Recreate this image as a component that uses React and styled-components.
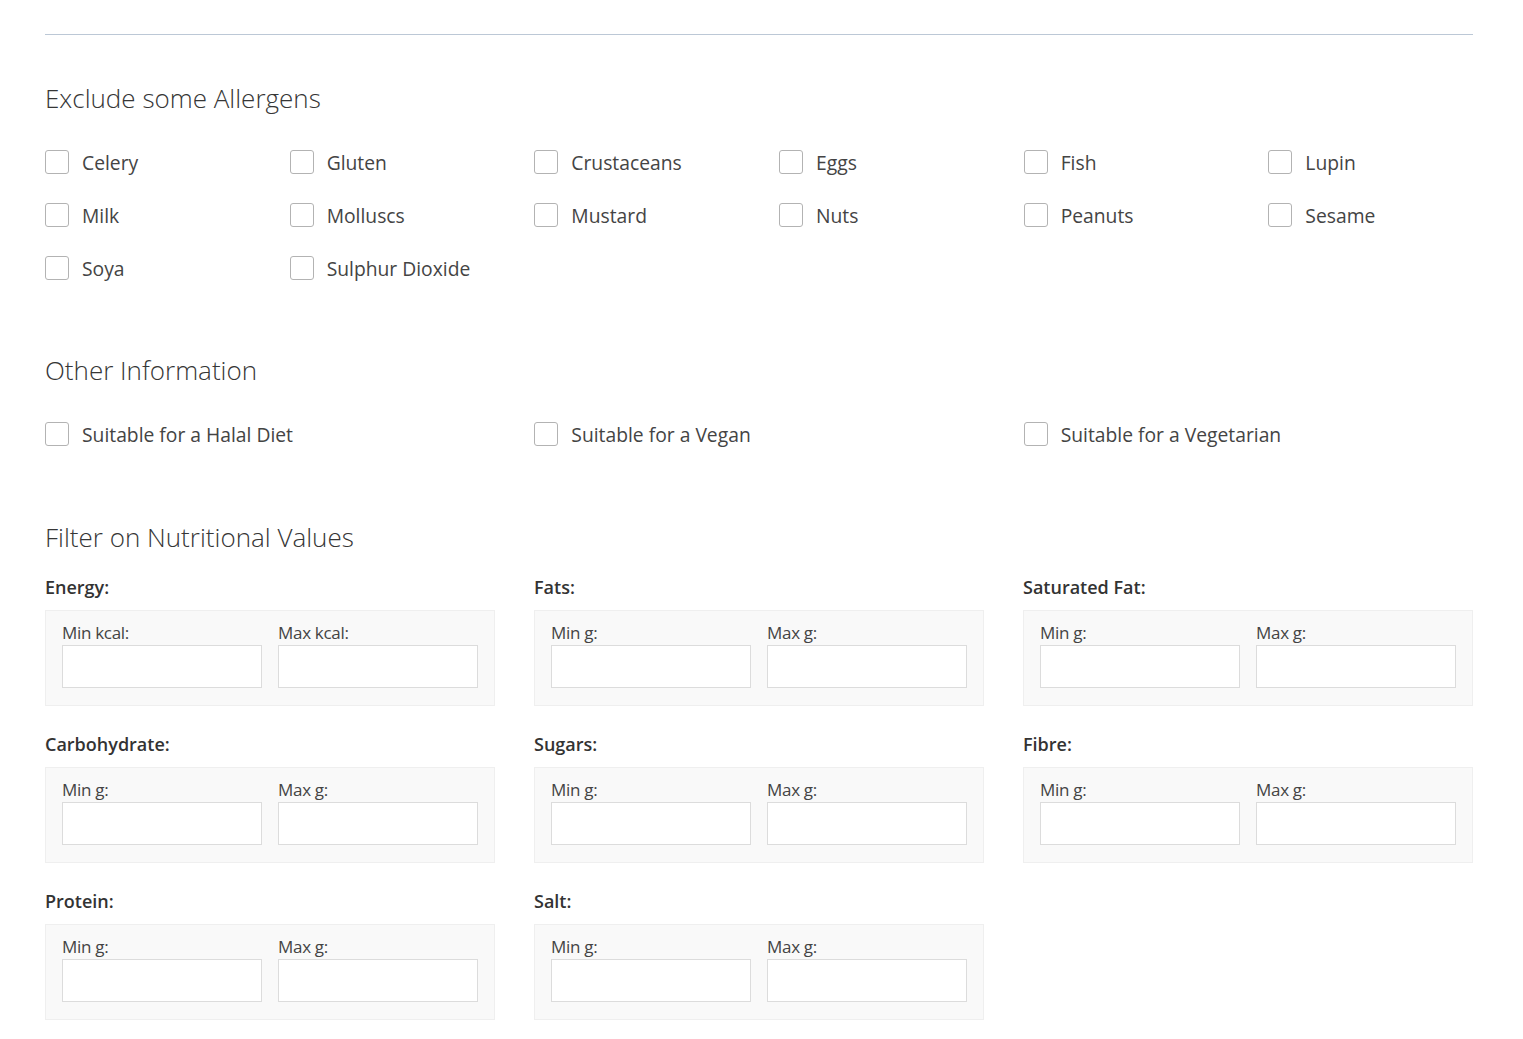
import React from "react";
import styled, { createGlobalStyle } from "styled-components";

const GlobalStyle = createGlobalStyle`
  * { box-sizing: border-box; }
  body {
    margin: 0;
    background: #ffffff;
    font-family: "Open Sans", "Liberation Sans", sans-serif;
    color: #333333;
  }
`;

const Page = styled.div`
  padding: 34px 50px 40px 45px;
`;

const Divider = styled.hr`
  margin: 0;
  border: none;
  border-top: 1px solid #bcc8d6;
`;

const Section = styled.section`
  margin-top: ${({ $top }) => $top}px;
`;

const SectionTitle = styled.h2`
  margin: 0 0 ${({ $gap }) => $gap}px 0;
  font-size: 26px;
  font-weight: 300;
  line-height: 36px;
  color: #363636;
`;

const CheckGrid = styled.div`
  display: grid;
  grid-template-columns: repeat(${({ $cols }) => $cols}, 1fr);
  column-gap: 40px;
  row-gap: 23px;
`;

const CheckItem = styled.label`
  display: flex;
  align-items: center;
  gap: 13px;
  height: 30px;
  font-size: 19.3px;
  color: #444444;
  cursor: pointer;
`;

const Box = styled.input.attrs({ type: "checkbox" })`
  appearance: none;
  margin: 0;
  width: 24px;
  height: 24px;
  flex-shrink: 0;
  border: 1px solid #b3b3b3;
  border-radius: 3px;
  background: #ffffff;
  cursor: pointer;
`;

const NutriGrid = styled.div`
  display: grid;
  grid-template-columns: repeat(3, 1fr);
  column-gap: 39px;
  row-gap: 26px;
`;

const Group = styled.div`
  display: flex;
  flex-direction: column;
`;

const GroupLabel = styled.div`
  font-size: 18px;
  font-weight: 600;
  line-height: 24px;
  color: #333333;
  margin-bottom: 11px;
`;

const RangeBox = styled.div`
  display: grid;
  grid-template-columns: 200px 200px;
  column-gap: 16px;
  padding: 12px 16px 17px 16px;
  background: #f9f9f9;
  border: 1px solid #efefef;
`;

const Field = styled.div`
  display: flex;
  flex-direction: column;
  gap: 2px;
`;

const FieldLabel = styled.label`
  font-size: 17px;
  line-height: 20px;
  color: #444444;
  letter-spacing: -0.3px;
`;

const NumInput = styled.input`
  width: 200px;
  height: 43px;
  border: 1px solid #dcdcdc;
  background: #ffffff;
  outline: none;
  padding: 0 8px;
  font-size: 16px;
`;

const allergens = [
  "Celery", "Gluten", "Crustaceans", "Eggs", "Fish", "Lupin",
  "Milk", "Molluscs", "Mustard", "Nuts", "Peanuts", "Sesame",
  "Soya", "Sulphur Dioxide",
];

const other = [
  "Suitable for a Halal Diet",
  "Suitable for a Vegan",
  "Suitable for a Vegetarian",
];

const nutrients = [
  { name: "Energy", unit: "kcal" },
  { name: "Fats", unit: "g" },
  { name: "Saturated Fat", unit: "g" },
  { name: "Carbohydrate", unit: "g" },
  { name: "Sugars", unit: "g" },
  { name: "Fibre", unit: "g" },
  { name: "Protein", unit: "g" },
  { name: "Salt", unit: "g" },
];

const App = () => {
  return (
    <>
      <GlobalStyle />
      <Page>
        <Divider />

        {/* Allergens */}
        <Section $top={45}>
          <SectionTitle $gap={31}>Exclude some Allergens</SectionTitle>
          <CheckGrid $cols={6}>
            {allergens.map((a) => (
              <CheckItem key={a}>
                <Box />
                {a}
              </CheckItem>
            ))}
          </CheckGrid>
        </Section>

        {/* Other info */}
        <Section $top={69}>
          <SectionTitle $gap={31}>Other Information</SectionTitle>
          <CheckGrid $cols={3}>
            {other.map((o) => (
              <CheckItem key={o}>
                <Box />
                {o}
              </CheckItem>
            ))}
          </CheckGrid>
        </Section>

        {/* Nutrition */}
        <Section $top={70}>
          <SectionTitle $gap={20}>Filter on Nutritional Values</SectionTitle>
          <NutriGrid>
            {nutrients.map((n) => (
              <Group key={n.name}>
                <GroupLabel>{n.name}:</GroupLabel>
                <RangeBox>
                  <Field>
                    <FieldLabel>Min {n.unit}:</FieldLabel>
                    <NumInput type="text" />
                  </Field>
                  <Field>
                    <FieldLabel>Max {n.unit}:</FieldLabel>
                    <NumInput type="text" />
                  </Field>
                </RangeBox>
              </Group>
            ))}
          </NutriGrid>
        </Section>
      </Page>
    </>
  );
};

export default App;
